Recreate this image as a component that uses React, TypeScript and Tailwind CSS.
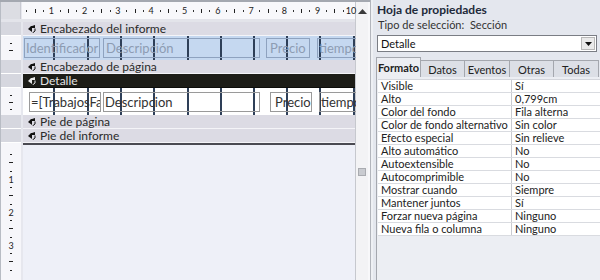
import React from "react";

const font = { fontFamily: 'Lato, "Noto Sans", Arial, sans-serif' };

function SectionIcon({ light }: { light?: boolean }) {
  const c = light ? "#e8e8e8" : "#111";
  return (
    <svg width="8" height="8" viewBox="0 0 8 8" className="mr-[4px] shrink-0">
      <path d="M7 0 L7 3 L4 3 L4 7 L0 4 L3 1 L4 1 Z" fill={c} />
      <path d="M7 3.5 L7 6 L4.5 8" stroke={c} strokeWidth="1" fill="none" />
    </svg>
  );
}

function Header({ title, dark }: { title: string; dark?: boolean }) {
  return (
    <div className="flex h-[14px]">
      <div className="w-[20px] shrink-0 border-b border-white bg-[#d6d7df]" />
      <div className="w-[2px] shrink-0 bg-[#e6e7ee]" />
      <div
        className={
          dark
            ? "flex flex-1 items-center border-b border-[#0d0d0a] bg-[#1d1d18] pl-[5px] text-[12px] leading-none text-[#e4e4e4]"
            : "flex flex-1 items-center border-b border-[#f4f4f8] bg-[#dcdbe4] pl-[5px] text-[12px] leading-none text-[#2a2a2a]"
        }
      >
        <SectionIcon light={dark} />
        <span>{title}</span>
      </div>
    </div>
  );
}

const gridXs = [30, 64, 97, 130, 164, 197, 230, 263, 296, 330];

function GridLines() {
  return (
    <>
      {gridXs.map((x) => (
        <div
          key={x}
          className="absolute top-0 bottom-0 w-[2px] bg-[#2e3f58]"
          style={{ left: x }}
        />
      ))}
    </>
  );
}

function Tick({ y, t }: { y: number; t: string }) {
  if (t === "·")
    return <div className="absolute left-[9px] h-[1px] w-[2px] bg-[#222]" style={{ top: y }} />;
  if (t === "–")
    return <div className="absolute left-[8px] h-[1px] w-[4px] bg-[#222]" style={{ top: y }} />;
  return (
    <span className="absolute left-0 w-[20px] text-center text-[9px] leading-none text-[#222]" style={{ top: y - 4 }}>
      {t}
    </span>
  );
}

function VRulerBand({ h, ticks }: { h: number; ticks: { y: number; t: string }[] }) {
  return (
    <div className="relative w-[20px] shrink-0 bg-[#f6f6fa]" style={{ height: h }}>
      {ticks.map((k, i) => (
        <Tick key={i} y={k.y} t={k.t} />
      ))}
    </div>
  );
}

function HRuler() {
  const pxcm = 33.3;
  const x0 = -4;
  const nums: { x: number; t: string }[] = [];
  const ticks: { x: number; big: boolean }[] = [];
  for (let cm = 0; cm <= 10; cm++) {
    const base = x0 + cm * pxcm;
    if (cm > 0) nums.push({ x: base, t: String(cm) });
    if (cm < 10) {
      ticks.push({ x: base + pxcm * 0.25, big: false });
      ticks.push({ x: base + pxcm * 0.5, big: true });
      ticks.push({ x: base + pxcm * 0.75, big: false });
    }
  }
  return (
    <div className="relative flex-1 bg-[#f8f8fb]">
      {ticks.map((m, i) => (
        <div
          key={i}
          className={m.big ? "absolute top-[7px] h-[4px] w-[1px] bg-[#222]" : "absolute top-[8px] h-[2px] w-[1px] bg-[#333]"}
          style={{ left: Math.round(m.x) }}
        />
      ))}
      {nums.map((m, i) => (
        <span
          key={i}
          className="absolute top-[4px] w-[12px] -translate-x-1/2 text-center text-[9px] leading-none text-[#222]"
          style={{ left: m.x }}
        >
          {m.t}
        </span>
      ))}
    </div>
  );
}

const props: [string, string][] = [
  ["Visible", "Sí"],
  ["Alto", "0,799cm"],
  ["Color del fondo", "Fila alterna"],
  ["Color de fondo alternativo", "Sin color"],
  ["Efecto especial", "Sin relieve"],
  ["Alto automático", "No"],
  ["Autoextensible", "No"],
  ["Autocomprimible", "No"],
  ["Mostrar cuando", "Siempre"],
  ["Mantener juntos", "Sí"],
  ["Forzar nueva página", "Ninguno"],
  ["Nueva fila o columna", "Ninguno"],
];

export default function App() {
  const bottomTicks: { y: number; t: string }[] = [];
  for (let cm = 0; cm < 4; cm++) {
    const b = 3 + cm * 33;
    if (cm > 0) bottomTicks.push({ y: b, t: String(cm) });
    bottomTicks.push({ y: b + 8, t: "·" });
    bottomTicks.push({ y: b + 16, t: "–" });
    bottomTicks.push({ y: b + 25, t: "·" });
  }
  return (
    <div className="flex h-[280px] w-[600px] overflow-hidden bg-[#e6e8ee]" style={font}>
      {/* Left: report designer */}
      <div className="flex h-full w-[370px] shrink-0 flex-col border-t-2 border-[#a4a8b0]">
        <div className="flex min-h-0 flex-1">
          <div className="flex w-[355px] flex-col border-l border-[#b8bcc4]">
            {/* Horizontal ruler */}
            <div className="flex h-[20px] border-b-[3px] border-[#e3e4ea]">
              <div className="w-[20px] shrink-0 border-r border-[#c9cad2] bg-[#dcdde3]" />
              <div className="w-[1px] shrink-0 bg-[#e6e7ee]" />
              <HRuler />
            </div>
            <Header title="Encabezado del informe" />
            <div className="flex h-[24px]">
              <VRulerBand h={24} ticks={[{ y: 7, t: "·" }, { y: 14, t: "–" }]} />
              <div className="w-[2px] shrink-0 bg-[#e6e7ee]" />
              <div className="relative flex-1 bg-[#c5d8f0] text-[13px] leading-none text-[#8d9cb3]">
                <GridLines />
                <div className="absolute top-[2px] left-[1px] flex h-[20px] w-[76px] items-center border border-[#8ea2bf] pl-[1px]">
                  Identificador
                </div>
                <div className="absolute top-[2px] left-[80px] flex h-[20px] w-[157px] items-center border border-[#8ea2bf] pl-[2px]">
                  Descripción
                </div>
                <div className="absolute top-[2px] left-[243px] flex h-[20px] w-[44px] items-center border border-[#8ea2bf] pl-[3px]">
                  Precio
                </div>
                <div className="absolute top-[2px] left-[294px] flex h-[20px] w-[39px] items-center overflow-hidden whitespace-nowrap border-y border-l border-[#8ea2bf] pl-[1px]">
                  tiempo
                </div>
              </div>
            </div>
            <Header title="Encabezado de página" />
            <Header title="Detalle" dark />
            <div className="flex h-[27px]">
              <VRulerBand h={27} ticks={[{ y: 7, t: "·" }, { y: 14, t: "–" }, { y: 21, t: "·" }]} />
              <div className="w-[2px] shrink-0 bg-[#e6e7ee]" />
              <div className="relative flex-1 bg-white text-[13px] leading-none text-[#333]">
                <GridLines />
                <div className="absolute top-[4px] left-[6px] flex h-[20px] w-[72px] items-center overflow-hidden whitespace-nowrap border border-[#9a9a9a] pl-[1px]">
                  =[TrabajosFa
                </div>
                <div className="absolute top-[4px] left-[80px] flex h-[20px] w-[157px] items-center border border-[#9a9a9a] pl-[1px]">
                  Descripcion
                </div>
                <div className="absolute top-[4px] left-[247px] flex h-[20px] w-[42px] items-center border border-[#9a9a9a] pl-[4px]">
                  Precio
                </div>
                <div className="absolute top-[4px] left-[296px] flex h-[20px] w-[37px] items-center overflow-hidden whitespace-nowrap border-y border-l border-[#9a9a9a] pl-[1px]">
                  tiempo
                </div>
              </div>
            </div>
            <Header title="Pie de página" />
            <Header title="Pie del informe" />
            <div className="flex min-h-0 flex-1">
              <div className="relative w-[20px] shrink-0 overflow-hidden bg-[#f6f6fa]">
                {bottomTicks.map((k, i) => (
                  <Tick key={i} y={k.y} t={k.t} />
                ))}
              </div>
              <div className="w-[2px] shrink-0 bg-[#e6e7ee]" />
              <div className="flex-1 border-t-2 border-[#4a4a52] bg-[#eef0f8]" />
            </div>
          </div>
          {/* Scrollbar */}
          <div className="flex w-[13px] shrink-0 flex-col items-center border-l border-[#c6c8ce] bg-[#f3f3f5]">
            <svg width="9" height="6" viewBox="0 0 9 6" className="mt-[6px]">
              <path d="M0 6 L4.5 1 L9 6 Z" fill="#3a3a3a" />
            </svg>
            <div className="mt-[154px] h-[8px] w-[8px] border border-[#a9abb0] bg-[#c9cbd0]" />
          </div>
          <div className="w-[2px] shrink-0 bg-[#f8f8fa]" />
        </div>
      </div>
      {/* Divider */}
      <div className="w-[1px] shrink-0 bg-[#b2b5bc]" />
      <div className="w-[2px] shrink-0 bg-[#eef0f4]" />
      {/* Right: property sheet */}
      <div className="flex flex-1 flex-col bg-[#e4e7ee] pt-[2px]">
        <div className="pl-[4px] text-[12px] font-bold leading-[15px] text-[#1e2a3a]">Hoja de propiedades</div>
        <div className="pl-[5px] text-[11px] leading-[15px] text-[#333]">Tipo de selección:&nbsp; Sección</div>
        <div className="mt-[3px] ml-[4px] mr-[3px] flex h-[17px] items-center justify-between border border-[#7a7d84] bg-white">
          <span className="pl-[3px] text-[11px] leading-none text-[#111]">Detalle</span>
          <div className="mr-[1px] flex h-[13px] w-[14px] items-center justify-center border border-[#b8b8b8] bg-[#eaeaea]">
            <svg width="7" height="4" viewBox="0 0 7 4">
              <path d="M0 0 L7 0 L3.5 4 Z" fill="#111" />
            </svg>
          </div>
        </div>
        {/* Tabs */}
        <div className="mt-[5px] ml-[3px] flex h-[20px] items-end text-[11px] leading-none text-[#222]">
          <div className="flex h-[20px] w-[45px] items-center justify-center border-x border-t border-[#a4a7ae] bg-[#eceef3] font-bold">
            Formato
          </div>
          <div className="flex h-[17px] w-[44px] items-center justify-center border-r border-t border-[#a4a7ae] bg-[#dcdfe6]">
            Datos
          </div>
          <div className="flex h-[17px] w-[45px] items-center justify-center border-r border-t border-[#a4a7ae] bg-[#dcdfe6]">
            Eventos
          </div>
          <div className="flex h-[17px] w-[44px] items-center justify-center border-r border-t border-[#a4a7ae] bg-[#dcdfe6]">
            Otras
          </div>
          <div className="flex h-[17px] w-[45px] items-center justify-center border-r border-t border-[#a4a7ae] bg-[#dcdfe6]">
            Todas
          </div>
        </div>
        <div className="ml-[3px] flex flex-1 flex-col border-l border-[#a4a7ae] bg-[#eceef3] pt-[2px] pl-[1px]">
          <div className="border-t border-[#d4d6dc]">
            {props.map(([k, v]) => (
              <div key={k} className="flex h-[13px] items-center border-b border-[#d9dbe0] bg-white text-[11px] leading-[12px] text-[#222]">
                <div className="w-[134px] shrink-0 self-stretch border-r border-[#c9cbd1] pl-[3px] whitespace-nowrap">{k}</div>
                <div className="flex-1 pl-[3px] whitespace-nowrap">{v}</div>
              </div>
            ))}
          </div>
        </div>
      </div>
    </div>
  );
}
